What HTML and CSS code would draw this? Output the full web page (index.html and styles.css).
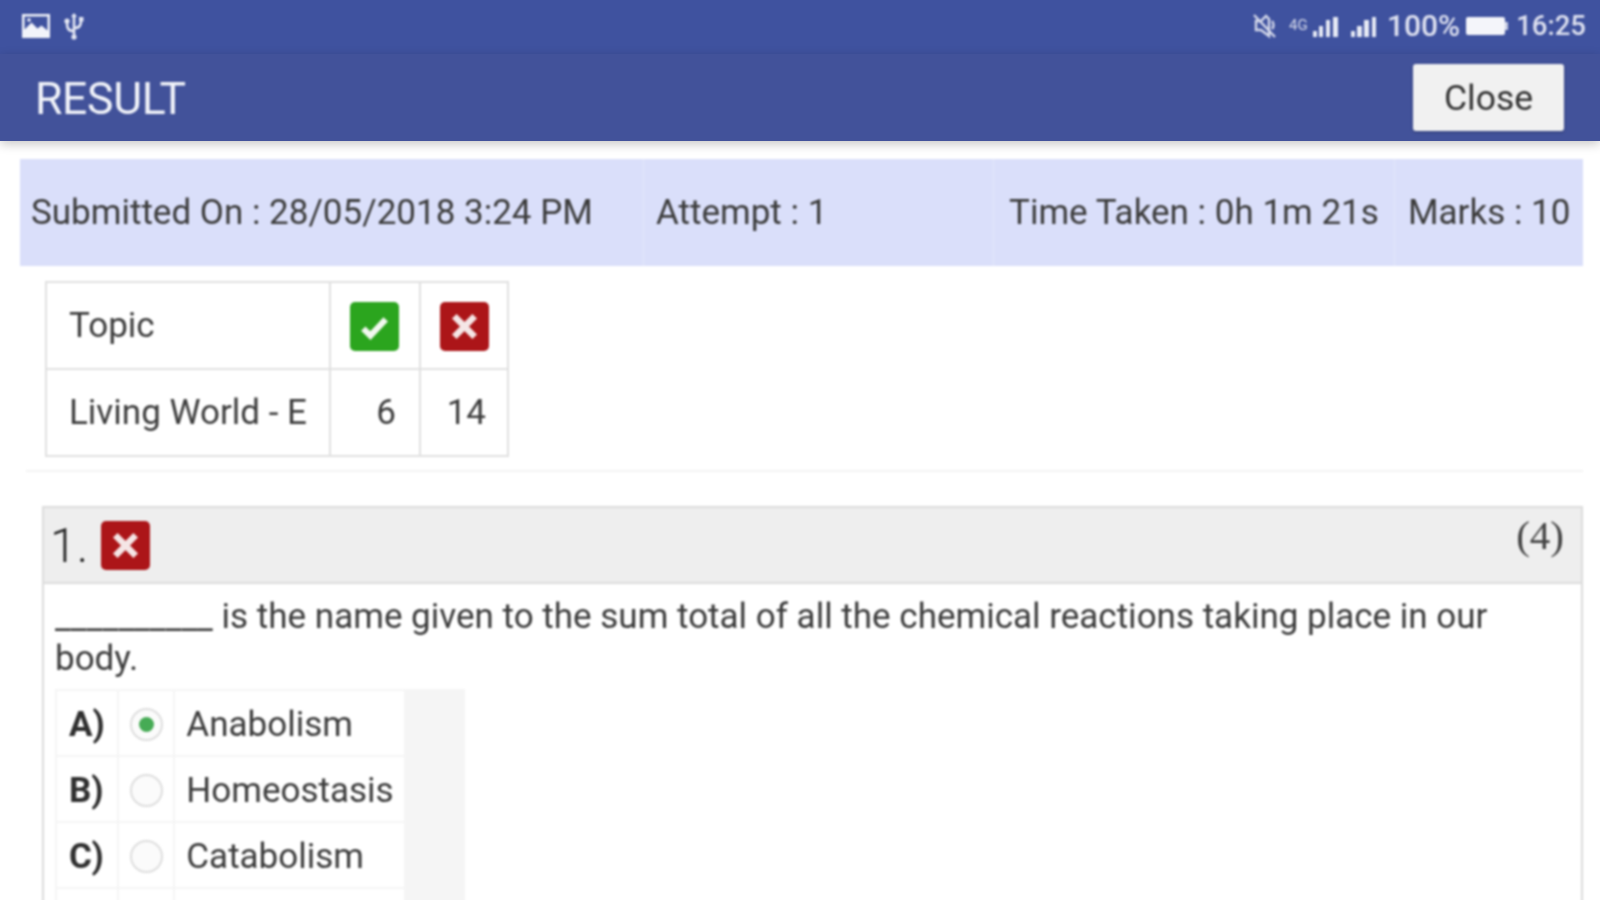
FILE: index.html
```html
<!DOCTYPE html>
<html lang="en">
<head>
<meta charset="utf-8">
<title>Result</title>
<link rel="stylesheet" href="styles.css">
</head>
<body>
<div class="page">
  <div class="status">
    <div class="status-left">
      <svg class="ic-img" viewBox="0 0 30 26"><path fill="#f2f4fa" fill-rule="evenodd" d="M1 1h28v24H1zM3.500 3.500v13l7-7 6 6 4-3 6 5v-14z"/><circle cx="8" cy="7" r="1.800" fill="#f2f4fa"/></svg>
      <svg class="ic-usb" viewBox="0 0 24 28" fill="none" stroke="#e6e9f4" stroke-width="2.600"><path d="M12 2v24M12 19c-6 0-7-3-7-8M12 16c6 0 7-3 7-8"/><path d="M12 1l-3 4h6z" fill="#e6e9f4" stroke="none"/><circle cx="5" cy="9" r="2.600" fill="#e6e9f4" stroke="none"/><path d="M17 5h4.500v4.500H17z" fill="#e6e9f4" stroke="none"/><circle cx="12" cy="25" r="2.600" fill="#e6e9f4" stroke="none"/></svg>
    </div>
    <div class="status-right">
      <svg class="ic-mute" viewBox="0 0 26 26" fill="none" stroke="#d5d9ea" stroke-width="2.400"><path d="M2 2l21 22M4 8v9h5l8 6V6l-3-3-5 5H4z"/><path d="M20 8c2 2 2 6 0 8"/></svg>
      <svg class="ic-net" viewBox="0 0 54 24"><text x="0" y="16" class="net-label">4G</text><path fill="#e6e9f4" d="M24 17h4v6h-4zM30 12h4v11h-4zM37 6h4v17h-4zM44 3h5v20h-5z"/></svg>
      <svg class="ic-sig" viewBox="0 0 30 24"><path fill="#e6e9f4" d="M2 17h4v6H2zM8 12h5v11H8zM15 6h5v17h-5zM23 3h4v20h-4z"/></svg>
      <span class="status-text pct">100%</span>
      <svg class="ic-bat" viewBox="0 0 44 24"><rect x="1" y="3" width="39" height="18" rx="2" fill="#f4f5fa"/><rect x="40" y="8" width="3" height="8" fill="#c9cee4"/></svg>
      <span class="status-text clock">16:25</span>
    </div>
  </div>
  <header class="appbar">
    <h1 class="title">RESULT</h1>
    <button class="close" type="button">Close</button>
  </header>
  <main class="content">
    <div class="info">
      <div class="info-cell c1">Submitted On : 28/05/2018 3:24 PM</div>
      <div class="info-cell c2">Attempt : 1</div>
      <div class="info-cell c3">Time Taken : 0h 1m 21s</div>
      <div class="info-cell c4">Marks : 10</div>
    </div>
    <table class="topics">
      <tr>
        <td class="t-name">Topic</td>
        <td class="t-icon"><span class="badge ok"><svg viewBox="0 0 24 24"><path d="M6.500 13l3.500 3.500 7.500-8" fill="none" stroke="#f2f8ef" stroke-width="3"/></svg></span></td>
        <td class="t-icon t-last"><span class="badge bad"><svg viewBox="0 0 24 24"><path d="M7 7l10 10M17 7L7 17" fill="none" stroke="#f5e6e6" stroke-width="3.200"/></svg></span></td>
      </tr>
      <tr>
        <td class="t-name">Living World - E</td>
        <td class="t-num">6</td>
        <td class="t-num t-num-last">14</td>
      </tr>
    </table>
    <hr class="rule">
    <section class="panel">
      <div class="panel-head">
        <div class="qno"><span>1.</span><span class="badge bad"><svg viewBox="0 0 24 24"><path d="M7 7l10 10M17 7L7 17" fill="none" stroke="#f5e6e6" stroke-width="3.200"/></svg></span></div>
        <div class="mark">(4)</div>
      </div>
      <div class="panel-body">
        <p class="question">__________ is the name given to the sum total of all the chemical reactions taking place in our body.</p>
        <table class="options">
          <tr><td class="o-key">A)</td><td class="o-radio"><span class="radio on"></span></td><td class="o-text">Anabolism</td><td class="o-side"></td></tr>
          <tr><td class="o-key">B)</td><td class="o-radio"><span class="radio"></span></td><td class="o-text">Homeostasis</td><td class="o-side"></td></tr>
          <tr><td class="o-key">C)</td><td class="o-radio"><span class="radio"></span></td><td class="o-text">Catabolism</td><td class="o-side"></td></tr>
          <tr><td class="o-key"></td><td class="o-radio"></td><td class="o-text"></td><td class="o-side"></td></tr>
        </table>
      </div>
    </section>
  </main>
</div>
</body>
</html>
```
FILE: styles.css
```css
* { box-sizing: border-box; }
html, body { margin: 0; height: 100%; overflow: hidden; background: #fff; }
.page {
  width: 1600px; height: 900px; overflow: hidden; display: flex; flex-direction: column;
  font-family: Roboto, "Liberation Sans", sans-serif; color: #3a3a3a;
}
.status-left, .status-right, .title, .close, .content { filter: blur(0.9px); }
.status {
  height: 54px; flex: none; background: #3f529f; display: flex; justify-content: space-between;
  align-items: center; padding: 0 14px 2px 21px;
}
.status-left, .status-right { display: flex; align-items: center; }
.ic-img { width: 30px; height: 26px; }
.ic-usb { width: 24px; height: 28px; margin-left: 11px; }
.ic-mute { width: 26px; height: 26px; margin-right: 11px; }
.ic-net { width: 54px; height: 24px; margin-right: 6px; }
.net-label { font-size: 15px; fill: #d5d9ea; }
.ic-sig { width: 30px; height: 24px; margin-right: 8px; }
.ic-bat { width: 44px; height: 24px; margin: 0 7px 0 5px; }
.status-text { font-weight: 500; color: #dfe2f0; line-height: 1; }
.pct { font-size: 30px; }
.clock { font-size: 27.5px; }
.appbar {
  height: 87px; flex: none; background: #42529a; display: flex; justify-content: space-between;
  align-items: center; padding: 0 36px 0 35px; box-shadow: 0 3px 10px rgba(0,0,0,.22); position: relative;
}
.title { margin: 2px 0 0; font-size: 44.5px; font-weight: 400; color: #f1f3f9; letter-spacing: -0.3px; }
.close {
  width: 151px; height: 67px; background: #f1f1f1; border: 0; border-radius: 3px;
  font: 400 35.5px Roboto, sans-serif; color: #333; padding: 0; box-shadow: 0 1px 3px rgba(0,0,0,.25);
}
.content { flex: 1; padding: 18px 17px 0 20px; min-height: 0; }
.info { height: 107px; display: flex; background: #dadffa; }
.info-cell { display: flex; align-items: center; font-size: 35px; color: #3c3c3c; border-right: 1px solid #e3e7fb; white-space: nowrap; padding-bottom: 1px; }
.c1 { width: 624px; padding-left: 11px; }
.c2 { width: 350px; padding-left: 12px; }
.c3 { width: 401px; padding-left: 15px; }
.c4 { flex: 1; padding-left: 13px; border-right: 0; }
.topics { border-collapse: collapse; margin: 15px 0 0 25px; font-size: 35px; color: #3c3c3c; }
.topics td { border: 2px solid #e0e0e0; height: 87px; padding: 0 0 1px; }
.topics .t-icon { padding: 1px 0 0; }
.t-name { width: 284px; padding-left: 22px !important; }
.t-icon { width: 90px; text-align: center; }
.t-last { width: 88px; }
.t-num { text-align: right; padding-right: 23px !important; }
.t-num-last { padding-right: 21px !important; }
.badge { display: inline-flex; width: 49px; height: 49px; border-radius: 5px; vertical-align: middle; }
.badge svg { width: 100%; height: 100%; }
.ok { background: #2ba51e; margin-right: 2px; }
.bad { background: #ac1518; }
.rule { border: 0; border-top: 2px solid #f3f3f3; margin: 13px 0 0 6px; }
.panel { margin: 34px 0 0 22px; border: 2px solid #dcdcdc; border-bottom: 0; height: 500px; }
.panel-head {
  height: 76px; background: #eeeeee; border-bottom: 2px solid #dcdcdc; display: flex;
  justify-content: space-between; padding: 0 17px 0 6px;
}
.qno { display: flex; align-items: center; gap: 13px; font-size: 48px; font-weight: 300; color: #222; }
.mark { font: 41px "Liberation Serif", serif; color: #444; padding-top: 3px; }
.panel-body { padding: 12px 12px 0 11px; }
.question { margin: 0; font-size: 35px; line-height: 42px; color: #3c3c3c; }
.options { border-collapse: collapse; margin-top: 9px; font-size: 35px; width: 410px; color: #3c3c3c; }
.options td { border: 2px solid #f5f5f5; height: 66px; padding: 2px 0 0; }
.options .o-radio { padding: 0 0 2px; }
.o-key { width: 62px; padding-left: 12px !important; font-weight: 700; color: #2f2f2f; }
.o-radio { width: 57px; text-align: center; }
.o-text { width: 231px; padding-left: 11px !important; white-space: nowrap; }
.o-side { width: 60px; background: #f5f5f5; }
.radio { display: inline-block; width: 33px; height: 33px; border: 2px solid #dedede; border-radius: 50%; background: #fbfbfb; vertical-align: middle; position: relative; }
.radio.on::after { content: ""; position: absolute; left: 7px; top: 7px; width: 15px; height: 15px; border-radius: 50%; background: #46ab55; }
```
